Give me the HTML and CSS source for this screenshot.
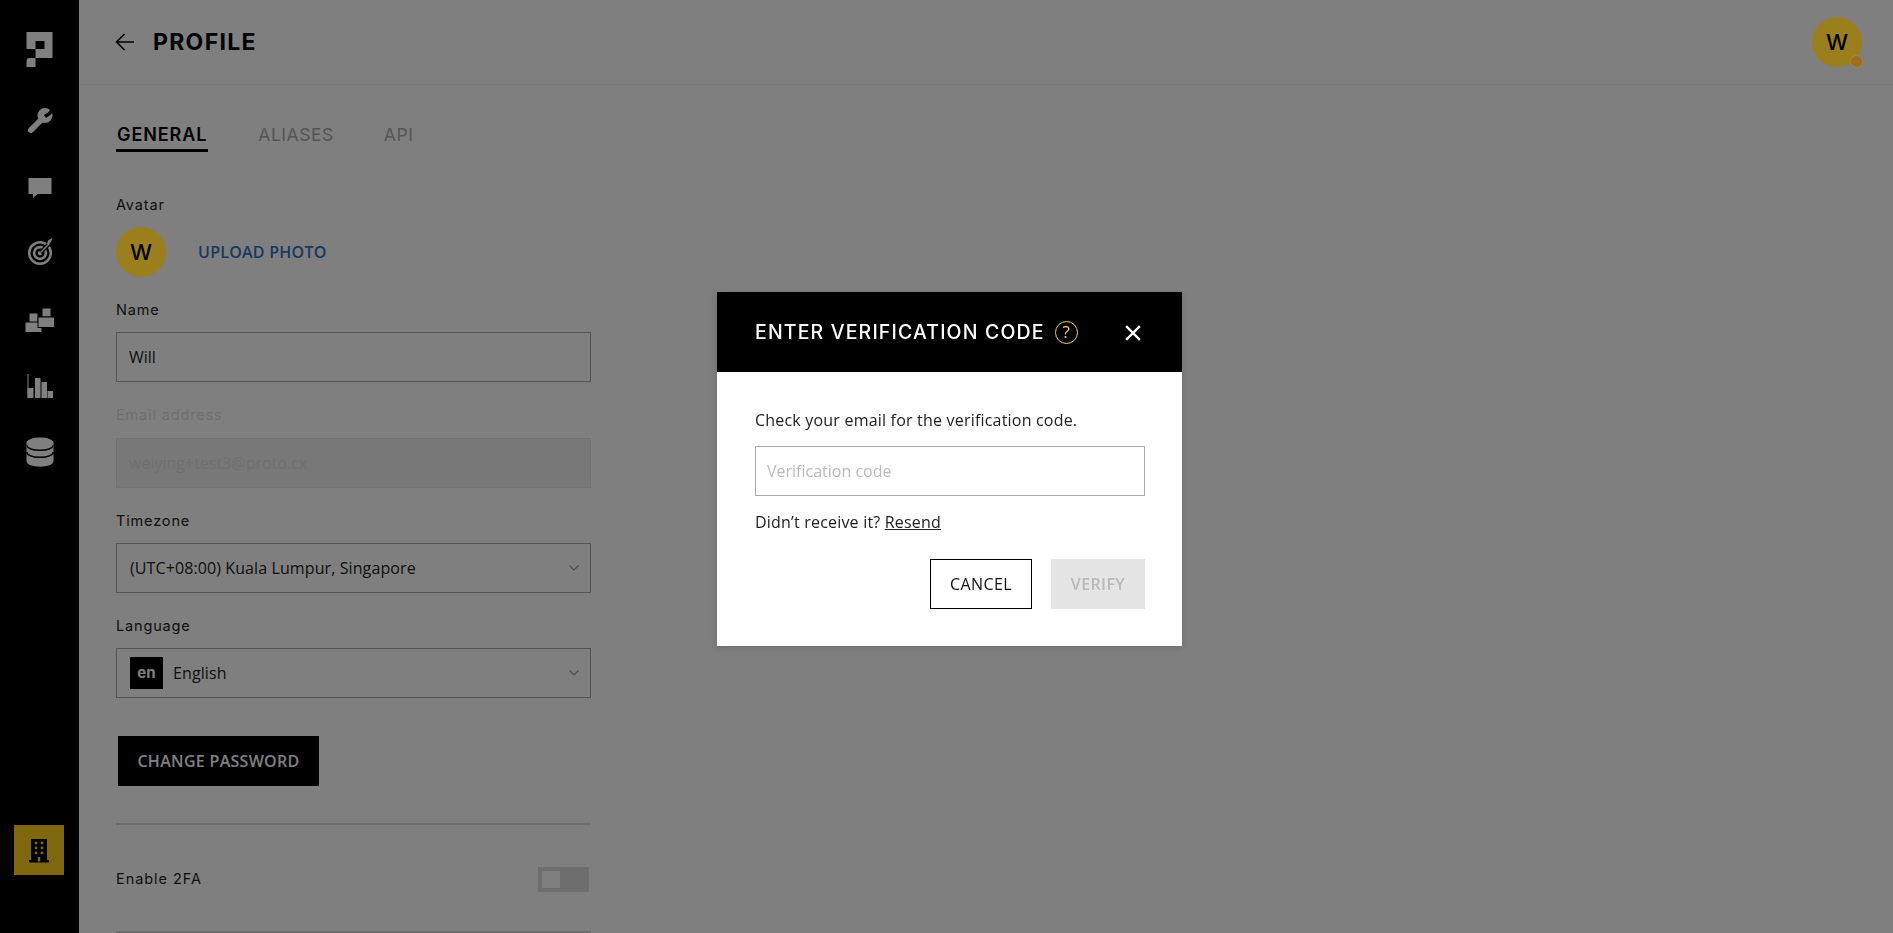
FILE: index.html
```html
<!DOCTYPE html>
<html lang="en">
<head>
<meta charset="utf-8">
<title>Profile</title>
<link rel="stylesheet" href="styles.css">
</head>
<body>
<div class="app">
  <aside class="sidebar">
    <nav class="nav">
      <svg class="nav-icon" viewBox="19.5 16 40 66"><path d="M26 32H52V58H35V49H44V41H35V49H26Z"/><path d="M29 58H35V67H26V61Q26 58 29 58Z"/></svg>
      <svg class="nav-icon" viewBox="19.5 82 40 66"><path d="M30.5 130L41 119.5" class="wrench-handle"/><circle cx="44.5" cy="115.5" r="7.5"/><path d="M44.5 116.5L49 113.5L54 108" class="wrench-notch"/></svg>
      <svg class="nav-icon" viewBox="19.5 148 40 66"><path d="M28 178H51V194H37L32.5 198V194H28Z"/></svg>
      <svg class="nav-icon" viewBox="19.5 214 40 66"><circle cx="39.5" cy="253" r="10.8" class="ring"/><circle cx="39.5" cy="253" r="5.9" class="ring"/><circle cx="39.5" cy="253" r="2.2"/><path d="M40 252.5L49 243.5" class="target-gap"/><path d="M40 252.5L49 243.5" class="target-shaft"/><path d="M46.5 243L48 240L52 238L50.5 242L47.5 245Z"/></svg>
      <svg class="nav-icon" viewBox="19.5 280 40 66"><rect x="25" y="322.500" width="16" height="9.500"/><rect x="29" y="313.500" width="8" height="8"/><rect x="42" y="308.500" width="8" height="8"/><rect x="37.500" y="317" width="16.500" height="10.500" class="block-front"/></svg>
      <svg class="nav-icon" viewBox="19.5 346 40 66"><rect x="27" y="374" width="1" height="24"/><rect x="27" y="388" width="6" height="10"/><rect x="34.500" y="378" width="5.500" height="20"/><rect x="41" y="382" width="5.500" height="16"/><rect x="47" y="391" width="5.500" height="7"/></svg>
      <svg class="nav-icon" viewBox="19.5 412 40 66"><path d="M26 443C26 435.500 53 435.500 53 443V461C53 468.500 26 468.500 26 461Z"/><path d="M26 445C28 452 51 452 53 445M26 452C28 459 51 459 53 452" class="db-line"/></svg>
    </nav>
    <button class="org-button" type="button" aria-label="Organisation">
      <svg class="org-icon" viewBox="0 0 20 24"><path d="M2 0H18V21H20V23.500H0V21H2Z" class="org-body"/><circle cx="7" cy="4" r="1.400" class="org-windows"/><circle cx="13" cy="4" r="1.400" class="org-windows"/><circle cx="7" cy="9" r="1.400" class="org-windows"/><circle cx="13" cy="9" r="1.400" class="org-windows"/><circle cx="7" cy="14" r="1.400" class="org-windows"/><circle cx="13" cy="14" r="1.400" class="org-windows"/><rect x="8.800" y="18" width="2.400" height="4.500" class="org-windows"/></svg>
    </button>
  </aside>
  <main class="main">
    <header class="topbar">
      <svg class="back" viewBox="0 0 20 20"><path d="M19 10H1.500M9.500 2L1.500 10L9.500 18"/></svg>
      <h1 class="page-title">PROFILE</h1>
      <div class="user">W<span class="status"></span></div>
    </header>
    <div class="content">
      <div class="tabs">
        <span class="tab tab-active">GENERAL</span>
        <span class="tab">ALIASES</span>
        <span class="tab">API</span>
      </div>
      <div class="form">
        <div class="label label-first">Avatar</div>
        <div class="avatar-row">
          <div class="avatar">W</div>
          <span class="upload">UPLOAD PHOTO</span>
        </div>
        <div class="label">Name</div>
        <input class="control" type="text" value="Will">
        <div class="label label-disabled">Email address</div>
        <input class="control control-disabled" type="text" value="weiying+test3@proto.cx" disabled>
        <div class="label">Timezone</div>
        <div class="control select">
          <span>(UTC+08:00) Kuala Lumpur, Singapore</span>
          <svg class="chevron" viewBox="0 0 10 6"><path d="M0.500 0.500L5 5L9.500 0.500"/></svg>
        </div>
        <div class="label">Language</div>
        <div class="control select">
          <span class="lang"><span class="lang-code">en</span>English</span>
          <svg class="chevron" viewBox="0 0 10 6"><path d="M0.500 0.500L5 5L9.500 0.500"/></svg>
        </div>
        <button class="change-password" type="button">CHANGE PASSWORD</button>
        <div class="divider"></div>
        <div class="twofa">
          <span class="twofa-label">Enable 2FA</span>
          <span class="toggle"><span class="knob"></span></span>
        </div>
        <div class="divider"></div>
      </div>
    </div>
  </main>
</div>
<div class="overlay">
  <div class="modal">
    <div class="modal-head">
      <h2 class="modal-title">ENTER VERIFICATION CODE</h2>
      <span class="help">?</span>
      <svg class="close" viewBox="0 0 14 14"><path d="M1 1L13 13M13 1L1 13"/></svg>
    </div>
    <div class="modal-body">
      <p class="modal-text">Check your email for the verification code.</p>
      <input class="code" type="text" placeholder="Verification code">
      <p class="resend-line">Didn’t receive it? <a class="resend" href="#">Resend</a></p>
      <div class="actions">
        <button class="btn btn-cancel" type="button">CANCEL</button>
        <button class="btn btn-verify" type="button">VERIFY</button>
      </div>
    </div>
  </div>
</div>
</body>
</html>
```
FILE: styles.css
```css
* { box-sizing: border-box; }
html, body { margin: 0; height: 100%; overflow: hidden; }
body { background: #fff; color: #000; font-family: "Open Sans", sans-serif; }
button, input { font-family: inherit; }

.app { display: flex; height: 933px; }

.sidebar { width: 79px; flex: none; background: #000; display: flex; flex-direction: column; align-items: center; padding: 16px 0 58px; }
.nav { display: flex; flex-direction: column; }
.nav-icon { display: block; width: 40px; height: 66px; fill: #fff; }
.wrench-handle { stroke: #fff; stroke-width: 6; stroke-linecap: round; fill: none; }
.wrench-notch { stroke: #000; stroke-width: 3.6; fill: none; }
.ring { fill: none; stroke: #fff; stroke-width: 2.6; }
.target-gap { stroke: #000; stroke-width: 4; fill: none; }
.target-shaft { stroke: #fff; stroke-width: 1.5; fill: none; }
.block-front { stroke: #000; stroke-width: 1; }
.db-line { stroke: #000; stroke-width: 1.4; fill: none; }
.org-button { margin-top: auto; width: 50px; height: 50px; border: 0; padding: 0; background: #ffcf21; display: flex; align-items: center; justify-content: center; margin-right: 1px; }
.org-icon { width: 20px; height: 24px; margin-top: 1px; }
.org-body { fill: #000; }
.org-windows { fill: #ffcf21; }

.main { flex: 1; min-width: 0; }
.topbar { height: 85px; border-bottom: 1px solid #f7f7f7; display: flex; align-items: center; padding: 0 37px 0 36px; }
.back { width: 20px; height: 20px; fill: none; stroke: #000; stroke-width: 1.5; margin-right: 18px; }
.page-title { margin: 0; font: 700 23px/1 Inter, sans-serif; letter-spacing: 1.3px; }
.user { position: relative; z-index: 10; margin-left: auto; margin-right: -6px; width: 50px; height: 50px; border-radius: 50%; background: #9a7f1c; display: flex; align-items: center; justify-content: center; font: 500 22px/1 Inter, sans-serif; }
.status { position: absolute; left: 38px; top: 38px; width: 13px; height: 13px; border-radius: 50%; background: #9a6f28; border: 1px solid #a78a2a; }

.content { padding: 0 37px; }
.tabs { display: flex; padding-top: 34px; gap: 50px; }
.tab { font: 400 17.500px/31px Inter, sans-serif; letter-spacing: 0.55px; color: #aaa; height: 33px; }
.tab-active { font-size: 18px; font-weight: 600; letter-spacing: 0.9px; color: #000; border-bottom: 3px solid #000; padding: 0 1px; }

.form { width: 475px; }
.label { font: 400 14.500px/20px Inter, sans-serif; letter-spacing: 0.85px; color: #222; margin-top: 23px; margin-bottom: 12px; }
.label-first { margin-top: 43px; }
.label-disabled { color: #ddd; margin-bottom: 13px; }
.avatar-row { display: flex; align-items: center; gap: 32px; }
.avatar { position: relative; z-index: 10; width: 50px; height: 50px; border-radius: 50%; background: #9a7f1c; display: flex; align-items: center; justify-content: center; font: 500 22px/1 Inter, sans-serif; }
.upload { font-size: 16px; font-weight: 600; letter-spacing: 0.25px; color: #3571bb; }

.control { display: block; width: 475px; height: 50px; border: 1px solid #a8a8a8; background: #fff; padding: 0 12px; font-size: 16px; color: #222; outline: 0; }
.control-disabled { background: #f0f0f0; border-color: #e6e6e6; color: #e0e0e0; }
.select { display: flex; align-items: center; justify-content: space-between; padding-left: 13px; padding-right: 11px; letter-spacing: 0.1px; }
.chevron { width: 10px; height: 6px; fill: none; stroke: #999; stroke-width: 1.2; }
.lang { display: flex; align-items: center; }
.lang-code { width: 33px; height: 32px; background: #000; color: #fff; font: 700 15px/32px Inter, sans-serif; text-align: center; margin-right: 10px; }

.change-password { display: block; margin: 38px 0 37px 2px; width: 201px; height: 50px; border: 0; background: #000; color: #fff; font-size: 16px; font-weight: 600; letter-spacing: 0.3px; padding: 0; }
.divider { height: 2px; background: #d8d8d8; }
.twofa { display: flex; align-items: center; justify-content: space-between; margin: 42px 0 39px; padding-right: 2px; height: 25px; }
.twofa-label { font: 400 14.500px/20px Inter, sans-serif; letter-spacing: 0.95px; color: #222; margin-bottom: 2px; }
.toggle { display: block; width: 51px; height: 25px; background: #dcdcdc; padding: 4px; }
.knob { display: block; width: 18px; height: 17px; background: #fff; }

.overlay { position: fixed; inset: 0; z-index: 5; background: rgba(0, 0, 0, 0.5); display: flex; align-items: flex-start; justify-content: flex-start; padding: 292px 0 0 717px; }
.modal { width: 465px; height: 354px; background: #fff; box-shadow: 0 2px 8px rgba(0, 0, 0, 0.15); }
.modal-head { height: 80px; background: #000; color: #fff; display: flex; align-items: center; padding: 0 37px 0 38px; }
.modal-title { margin: 1px 0 0; font: 500 19.500px/1 Inter, sans-serif; letter-spacing: 1.15px; white-space: nowrap; }
.help { width: 23px; height: 23px; border: 1.700px solid #f2cf4e; border-radius: 50%; color: #f2cf4e; margin-left: 10px; font-size: 17px; line-height: 20px; text-align: center; flex: none; }
.close { width: 16px; height: 16px; margin-left: auto; margin-right: 4px; margin-top: 1px; fill: none; stroke: #fff; stroke-width: 2; flex: none; }
.modal-body { padding: 38px 37px 0 38px; }
.modal-text { margin: 0; font-size: 16px; line-height: 20px; color: #222; letter-spacing: 0.2px; white-space: nowrap; }
.code { display: block; width: 390px; height: 50px; margin-top: 16px; border: 1px solid #aaa; padding: 0 11px; font-size: 16px; outline: 0; background: #fff; }
.code::placeholder { color: #bbb; opacity: 1; }
.resend-line { margin: 16px 0 0; font-size: 16px; line-height: 20px; color: #222; letter-spacing: 0.2px; }
.resend { color: #222; text-decoration: underline; }
.actions { display: flex; justify-content: flex-end; gap: 19px; margin-top: 27px; }
.btn { height: 50px; font-size: 16px; font-weight: 500; letter-spacing: 0.4px; padding: 0; }
.btn-cancel { width: 102px; background: #fff; border: 1px solid #000; color: #111; }
.btn-verify { width: 94px; background: #e5e5e5; border: 0; color: #b9b9b9; font-weight: 600; }
```
